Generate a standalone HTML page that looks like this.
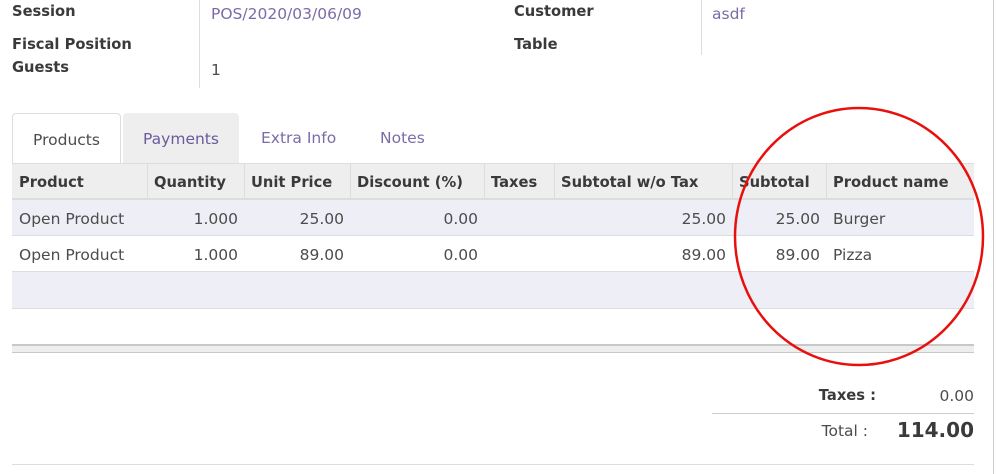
<!DOCTYPE html>
<html><head><meta charset="utf-8"><style>
*{margin:0;padding:0;box-sizing:border-box}
body{width:996px;height:474px;background:#fff;position:relative;overflow:hidden;font-family:"DejaVu Sans","Liberation Sans",sans-serif;font-size:15.5px;color:#4c4c4c}
.a{position:absolute;white-space:nowrap}
.b{font-weight:bold;font-size:14.7px;color:#3a3a3a}
.l{color:#7c6ba8}
.vl{position:absolute;width:1px;background:#ddd}
.hl{position:absolute;height:1px;background:#ddd}
.cell{position:absolute;height:36px;line-height:38px;white-space:nowrap}
.r{text-align:right}
</style></head><body>
<div class="a b" style="left:12px;top:3px">Session</div>
<div class="a l" style="left:211px;top:5px;font-size:15.5px">POS/2020/03/06/09</div>
<div class="a b" style="left:12px;top:36px">Fiscal Position</div>
<div class="a b" style="left:12px;top:59px">Guests</div>
<div class="a" style="left:211px;top:61px">1</div>
<div class="vl" style="left:199px;top:0;height:88px"></div>
<div class="a b" style="left:514px;top:3px">Customer</div>
<div class="a b" style="left:514px;top:36px">Table</div>
<div class="a l" style="left:712px;top:5px">asdf</div>
<div class="vl" style="left:701px;top:0;height:55px"></div>
<div class="vl" style="left:993px;top:0;height:474px;background:#ccc"></div>

<div class="a" style="left:12px;top:113px;width:109px;height:51px;border:1px solid #ddd;border-bottom:none;border-radius:4px 4px 0 0;background:#fff;text-align:center;line-height:52px;color:#4c4c4c">Products</div>
<div class="a" style="left:123px;top:113px;width:116px;height:50px;background:#eee;border-radius:4px 4px 0 0;text-align:center;line-height:52px;color:#6b5a9c">Payments</div>
<div class="a l" style="left:261px;top:129px">Extra Info</div>
<div class="a l" style="left:380px;top:129px">Notes</div>

<div class="a" style="left:12px;top:163px;width:962px;height:37px;background:#eee;border-top:1px solid #ddd;border-bottom:2px solid #ddd"></div>
<div class="a" style="left:12px;top:200px;width:962px;height:36px;background:#eeeef6;border-bottom:1px solid #ddd"></div>
<div class="a" style="left:12px;top:236px;width:962px;height:36px;background:#fff;border-bottom:1px solid #ddd"></div>
<div class="a" style="left:12px;top:272px;width:962px;height:37px;background:#eeeef6;border-bottom:1px solid #ddd"></div>
<div class="vl" style="left:147px;top:164px;height:35px"></div>
<div class="vl" style="left:244px;top:164px;height:35px"></div>
<div class="vl" style="left:350px;top:164px;height:35px"></div>
<div class="vl" style="left:484px;top:164px;height:35px"></div>
<div class="vl" style="left:554px;top:164px;height:35px"></div>
<div class="vl" style="left:732px;top:164px;height:35px"></div>
<div class="vl" style="left:826px;top:164px;height:35px"></div>

<div class="cell b" style="left:19px;top:164px">Product</div>
<div class="cell b" style="left:154px;top:164px">Quantity</div>
<div class="cell b" style="left:251px;top:164px">Unit Price</div>
<div class="cell b" style="left:357px;top:164px">Discount (%)</div>
<div class="cell b" style="left:491px;top:164px">Taxes</div>
<div class="cell b" style="left:561px;top:164px">Subtotal w/o Tax</div>
<div class="cell b" style="left:739px;top:164px">Subtotal</div>
<div class="cell b" style="left:833px;top:164px">Product name</div>

<div class="cell" style="left:19px;top:200px">Open Product</div>
<div class="cell r" style="left:148px;width:90px;top:200px">1.000</div>
<div class="cell r" style="left:245px;width:99px;top:200px">25.00</div>
<div class="cell r" style="left:351px;width:127px;top:200px">0.00</div>
<div class="cell r" style="left:555px;width:171px;top:200px">25.00</div>
<div class="cell r" style="left:733px;width:87px;top:200px">25.00</div>
<div class="cell" style="left:833px;top:200px">Burger</div>

<div class="cell" style="left:19px;top:236px">Open Product</div>
<div class="cell r" style="left:148px;width:90px;top:236px">1.000</div>
<div class="cell r" style="left:245px;width:99px;top:236px">89.00</div>
<div class="cell r" style="left:351px;width:127px;top:236px">0.00</div>
<div class="cell r" style="left:555px;width:171px;top:236px">89.00</div>
<div class="cell r" style="left:733px;width:87px;top:236px">89.00</div>
<div class="cell" style="left:833px;top:236px">Pizza</div>

<div class="a" style="left:12px;top:344px;width:962px;height:9px;background:#eee;border-top:2px solid #c8c8c8;border-bottom:1px solid #c8c8c8"></div>

<div class="a b" style="left:760px;width:116px;top:387px;text-align:right">Taxes :</div>
<div class="a" style="left:880px;width:94px;top:387px;text-align:right">0.00</div>
<div class="hl" style="left:712px;top:413px;width:262px;background:#ccc"></div>
<div class="a" style="left:760px;width:108px;top:422px;text-align:right">Total :</div>
<div class="a" style="left:870px;width:104px;top:418px;text-align:right;font-size:20px;font-weight:bold;color:#3a3a3a">114.00</div>
<div class="hl" style="left:12px;top:464px;width:962px"></div>

<svg class="a" style="left:0;top:0" width="996" height="474"><ellipse cx="859" cy="236.5" rx="124" ry="128.5" fill="none" stroke="#e8100c" stroke-width="2.5"/></svg>
</body></html>
